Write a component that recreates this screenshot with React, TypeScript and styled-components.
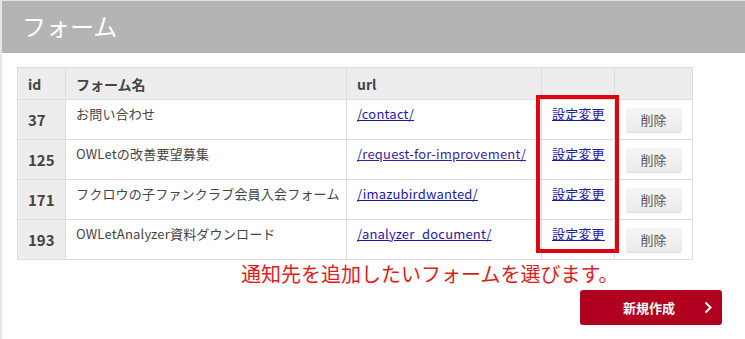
import styled, { createGlobalStyle } from "styled-components";

export const GlobalStyle = createGlobalStyle`
  html, body {
    margin: 0;
    padding: 0;
    background: #fff;
  }
  body {
    font-family: "Noto Sans CJK JP", "Noto Sans", sans-serif;
    color: #333;
  }
`;

const Page = styled.div`
  width: 745px;
  height: 339px;
  box-sizing: border-box;
  border-left: 2px solid #e6e6e6;
  border-top: 1px solid #e2e2e2;
  overflow: hidden;
`;

const TitleBar = styled.div`
  height: 52px;
  box-sizing: border-box;
  background: #b4b4b4;
  display: flex;
  align-items: center;
  padding: 0 0 3px 20px;
`;

const Title = styled.h1`
  margin: 0;
  font-size: 24px;
  font-weight: 400;
  color: #fff;
`;

const Body = styled.div`
  padding: 14px 0 0 15px;
`;

const TableWrap = styled.div`
  position: relative;
  width: 675px;
`;

const Table = styled.table`
  width: 675px;
  border-collapse: collapse;
  table-layout: fixed;
  font-size: 13px;
`;

const Th = styled.th<{ $w: number }>`
  width: ${(p) => p.$w}px;
  height: 32px;
  background: #ededed;
  border: 1px solid #dddddd;
  text-align: left;
  padding: 0 10px;
  font-size: 14px;
  font-weight: 700;
  color: #444;
  box-sizing: border-box;
`;

const Td = styled.td<{ $align?: string; $valign?: string }>`
  height: 40px;
  border: 1px solid #dddddd;
  padding: 4px 10px 0;
  vertical-align: ${(p) => p.$valign || "top"};
  text-align: ${(p) => p.$align || "left"};
  color: #444;
  white-space: nowrap;
  letter-spacing: 0.2px;
  box-sizing: border-box;
`;

const IdCell = styled(Td)`
  background: #ededed;
  font-weight: 700;
  font-size: 15px;
  vertical-align: middle;
  padding-top: 0;
  letter-spacing: 0;
`;

const ButtonCell = styled(Td)`
  vertical-align: middle;
  text-align: center;
  padding-top: 0;
`;

const Link = styled.a<{ $visited?: boolean }>`
  color: ${(p) => (p.$visited ? "#3b1f9a" : "#1d1aa8")};
  text-decoration: underline;
  cursor: pointer;
`;

const DeleteButton = styled.button`
  width: 56px;
  height: 24px;
  border: none;
  border-radius: 3px;
  background: linear-gradient(#f5f5f5, #ebebeb);
  box-shadow: 0 1px 1px rgba(0, 0, 0, 0.15);
  font-family: inherit;
  font-size: 13px;
  color: #555;
  cursor: pointer;
`;

const Highlight = styled.div`
  position: absolute;
  left: 519px;
  top: 28px;
  width: 83px;
  height: 158px;
  box-sizing: border-box;
  border: 4px solid #e3000f;
  pointer-events: none;
`;

const Note = styled.p`
  margin: 1px 0 0 224px;
  font-size: 20px;
  line-height: 26px;
  color: #e31b1b;
`;

const Actions = styled.div`
  display: flex;
  justify-content: flex-end;
  padding-right: 23px;
  margin-top: 3px;
`;

const PrimaryButton = styled.button`
  position: relative;
  width: 142px;
  height: 35px;
  border: none;
  border-radius: 3px;
  background: #b1001f;
  color: #fff;
  font-family: inherit;
  font-size: 13px;
  font-weight: 700;
  display: flex;
  align-items: center;
  justify-content: center;
  padding-right: 10px;
  cursor: pointer;
`;

const Chevron = styled.svg`
  position: absolute;
  right: 10px;
  top: 11px;
`;

const rows = [
  { id: 37, name: "お問い合わせ", url: "/contact/" },
  { id: 125, name: "OWLetの改善要望募集", url: "/request-for-improvement/", visited: true },
  { id: 171, name: "フクロウの子ファンクラブ会員入会フォーム", url: "/imazubirdwanted/" },
  { id: 193, name: "OWLetAnalyzer資料ダウンロード", url: "/analyzer_document/" },
];

function App() {
  return (
    <>
      <GlobalStyle />
      <Page>
        <TitleBar>
          <Title>フォーム</Title>
        </TitleBar>
        <Body>
          <TableWrap>
            <Table>
              <thead>
                <tr>
                  <Th $w={48}>id</Th>
                  <Th $w={281}>フォーム名</Th>
                  <Th $w={195}>url</Th>
                  <Th $w={73}></Th>
                  <Th $w={78}></Th>
                </tr>
              </thead>
              <tbody>
                {rows.map((r) => (
                  <tr key={r.id}>
                    <IdCell>{r.id}</IdCell>
                    <Td>{r.name}</Td>
                    <Td>
                      <Link $visited={r.visited}>{r.url}</Link>
                    </Td>
                    <Td $align="center">
                      <Link>設定変更</Link>
                    </Td>
                    <ButtonCell>
                      <DeleteButton>削除</DeleteButton>
                    </ButtonCell>
                  </tr>
                ))}
              </tbody>
            </Table>
            <Highlight />
          </TableWrap>
          <Note>通知先を追加したいフォームを選びます。</Note>
          <Actions>
            <PrimaryButton>
              新規作成
              <Chevron width="8" height="13" viewBox="0 0 8 13">
                <path d="M1.5 1.5 L6.5 6.5 L1.5 11.5" fill="none" stroke="#fff" strokeWidth="2" />
              </Chevron>
            </PrimaryButton>
          </Actions>
        </Body>
      </Page>
    </>
  );
}

export default App;
